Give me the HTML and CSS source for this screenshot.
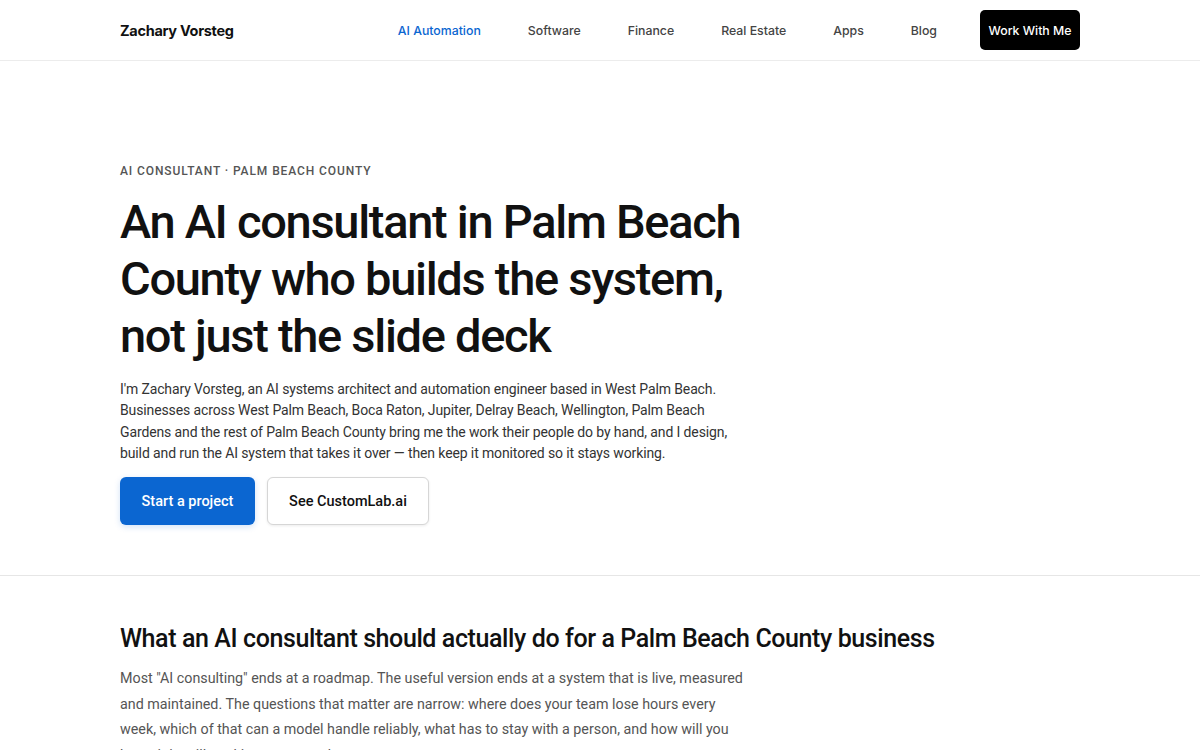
FILE: index.html
```html
<!DOCTYPE html>
<html lang="en">
<head>
<meta charset="utf-8">
<title>Zachary Vorsteg — AI Consultant Palm Beach County</title>
<link rel="stylesheet" href="styles.css">
</head>
<body>
<header class="site-header">
  <div class="container header-inner">
    <a class="logo" href="#">Zachary Vorsteg</a>
    <nav class="nav">
      <a class="nav-link active" href="#">AI Automation</a>
      <a class="nav-link" href="#">Software</a>
      <a class="nav-link" href="#">Finance</a>
      <a class="nav-link" href="#">Real Estate</a>
      <a class="nav-link" href="#">Apps</a>
      <a class="nav-link" href="#">Blog</a>
      <a class="nav-cta" href="#">Work With Me</a>
    </nav>
  </div>
</header>
<main>
  <section class="hero">
    <div class="container">
      <p class="eyebrow">AI Consultant · Palm Beach County</p>
      <h1 class="hero-title">An AI consultant in Palm Beach County who builds the system, not just the slide deck</h1>
      <p class="hero-lead">I'm Zachary Vorsteg, an AI systems architect and automation engineer based in West Palm Beach. Businesses across West Palm Beach, Boca Raton, Jupiter, Delray Beach, Wellington, Palm Beach Gardens and the rest of Palm Beach County bring me the work their people do by hand, and I design, build and run the AI system that takes it over — then keep it monitored so it stays working.</p>
      <div class="hero-actions">
        <a class="btn btn-primary" href="#">Start a project</a>
        <a class="btn btn-secondary" href="#">See CustomLab.ai</a>
      </div>
    </div>
  </section>
  <section class="section">
    <div class="container">
      <h2 class="section-title">What an AI consultant should actually do for a Palm Beach County business</h2>
      <p class="section-text">Most "AI consulting" ends at a roadmap. The useful version ends at a system that is live, measured and maintained. The questions that matter are narrow: where does your team lose hours every week, which of that can a model handle reliably, what has to stay with a person, and how will you know it is still working next month.</p>
    </div>
  </section>
</main>
</body>
</html>
```
FILE: styles.css
```css
* { box-sizing: border-box; }
html, body { margin: 0; padding: 0; }
body {
  font-family: Roboto, "Noto Sans", "Liberation Sans", sans-serif;
  color: #111;
  background: #fff;
  -webkit-font-smoothing: antialiased;
}
a { text-decoration: none; color: inherit; }
.container {
  width: 960px;
  margin: 0 auto;
}
.site-header {
  height: 61px;
  border-bottom: 1px solid #ececec;
}
.header-inner {
  height: 60px;
  display: flex;
  align-items: center;
  justify-content: space-between;
}
.logo {
  font-family: Inter, Roboto, sans-serif;
  font-size: 14.5px;
  font-weight: 700;
  color: #111;
  letter-spacing: -0.3px;
}
.nav {
  display: flex;
  align-items: center;
}
.nav-link {
  font-family: Inter, Roboto, sans-serif;
  font-size: 12.3px;
  font-weight: 500;
  color: #444;
  margin-left: 47px;
}
.nav-link:first-child { margin-left: 0; }
.nav-link.active { color: #0b66d1; }
.nav-cta {
  font-family: Inter, Roboto, sans-serif;
  margin-left: 43px;
  background: #000;
  color: #fff;
  font-size: 12.3px;
  font-weight: 500;
  height: 40px;
  width: 100px;
  display: flex;
  align-items: center;
  justify-content: center;
  border-radius: 5px;
}
.hero {
  padding: 103px 0 50px;
  border-bottom: 1px solid #e6e6e6;
}
.eyebrow {
  margin: 0 0 15px;
  font-size: 12px;
  font-weight: 500;
  letter-spacing: 0.9px;
  text-transform: uppercase;
  color: #555;
}
.hero-title {
  margin: 0 0 15px;
  font-size: 47px;
  line-height: 57px;
  font-weight: 500;
  letter-spacing: -1.3px;
  color: #111;
  max-width: 640px;
}
.hero-lead {
  margin: 0 0 13px;
  font-size: 14px;
  line-height: 21.3px;
  letter-spacing: -0.12px;
  color: #333;
  max-width: 620px;
}
.hero-actions {
  display: flex;
  gap: 12px;
}
.btn {
  height: 48px;
  display: inline-flex;
  align-items: center;
  justify-content: center;
  border-radius: 6px;
  font-size: 14.5px;
  font-weight: 500;
}
.btn-primary {
  width: 135px;
  background: #0b66d1;
  color: #fff;
  box-shadow: 0 2px 6px rgba(11, 102, 209, 0.18);
}
.btn-secondary {
  width: 162px;
  background: #fff;
  color: #111;
  border: 1.5px solid #d6d6d6;
  box-shadow: 0 1px 3px rgba(0, 0, 0, 0.08);
}
.section {
  padding: 47px 0 40px;
}
.section-title {
  margin: 0 0 11px;
  font-size: 25px;
  line-height: 32px;
  font-weight: 500;
  letter-spacing: -0.4px;
  color: #111;
}
.section-text {
  margin: 0;
  font-size: 14.3px;
  line-height: 25.5px;
  color: #555;
  max-width: 630px;
}
```
